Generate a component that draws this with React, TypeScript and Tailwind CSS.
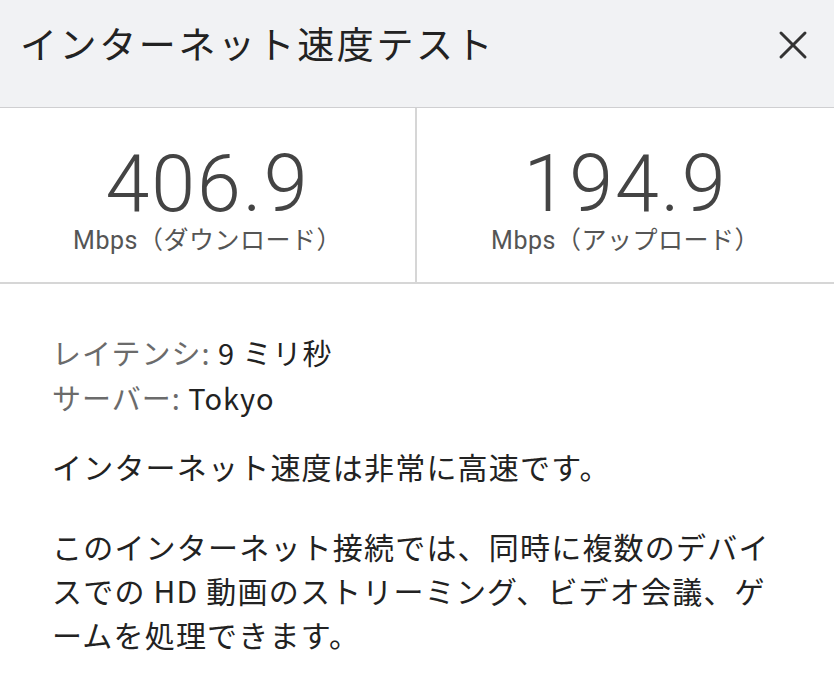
export default function App() {
  const jp = { fontFamily: '"Noto Sans CJK JP", sans-serif' }
  const num = { fontFamily: 'Roboto, sans-serif' }
  return (
    <div className="w-[834px] h-[695px] bg-white overflow-hidden text-[#222]" style={jp}>
      {/* header */}
      <header className="h-[108px] bg-[#f1f2f4] border-b border-[#cfcfd1] flex items-start justify-between pl-[20px] pr-[26px] pt-[18px]">
        <h1 className="text-[37px] leading-[50px] font-normal tracking-[2.6px] text-[#222]">インターネット速度テスト</h1>
        <button className="mt-[12px] w-[30px] h-[30px] flex items-center justify-center">
          <svg width="30" height="30" viewBox="0 0 30 30" fill="none" stroke="#333" strokeWidth="3" strokeLinecap="round">
            <line x1="3" y1="3" x2="27" y2="27" />
            <line x1="27" y1="3" x2="3" y2="27" />
          </svg>
        </button>
      </header>

      {/* speeds */}
      <div className="grid grid-cols-[417px_1fr] h-[176px] border-b-2 border-[#d6d6d6]">
        <div className="border-r-2 border-[#d6d6d6] flex flex-col items-center pt-[36px]">
          <div className="text-[79px] leading-[80px] font-light tracking-[2px] text-[#444]" style={num}>406.9</div>
          <div className="text-[25px] leading-[28px] tracking-[0.5px] text-[#555]">
            <span style={num}>Mbps</span>（ダウンロード）
          </div>
        </div>
        <div className="flex flex-col items-center pt-[36px]">
          <div className="text-[79px] leading-[80px] font-light tracking-[2px] text-[#444]" style={num}>194.9</div>
          <div className="text-[25px] leading-[28px] tracking-[0.5px] text-[#555]">
            <span style={num}>Mbps</span>（アップロード）
          </div>
        </div>
      </div>

      {/* details */}
      <div className="pl-[52px] pr-[48px] pt-[46px]">
        <div className="text-[29px] leading-[45px] tracking-[1px]">
          <p><span className="text-[#6b6b6b]">レイテンシ:</span> 9 ミリ秒</p>
          <p><span className="text-[#6b6b6b]">サーバー:</span> Tokyo</p>
        </div>
        <p className="text-[30px] leading-[44px] tracking-[1.2px] mt-[24px]">インターネット速度は非常に高速です。</p>
        <p className="text-[30px] leading-[44px] tracking-[1.2px] mt-[36px]">
          このインターネット接続では、同時に複数のデバイスでの HD 動画のストリーミング、ビデオ会議、ゲームを処理できます。
        </p>
      </div>
    </div>
  )
}
